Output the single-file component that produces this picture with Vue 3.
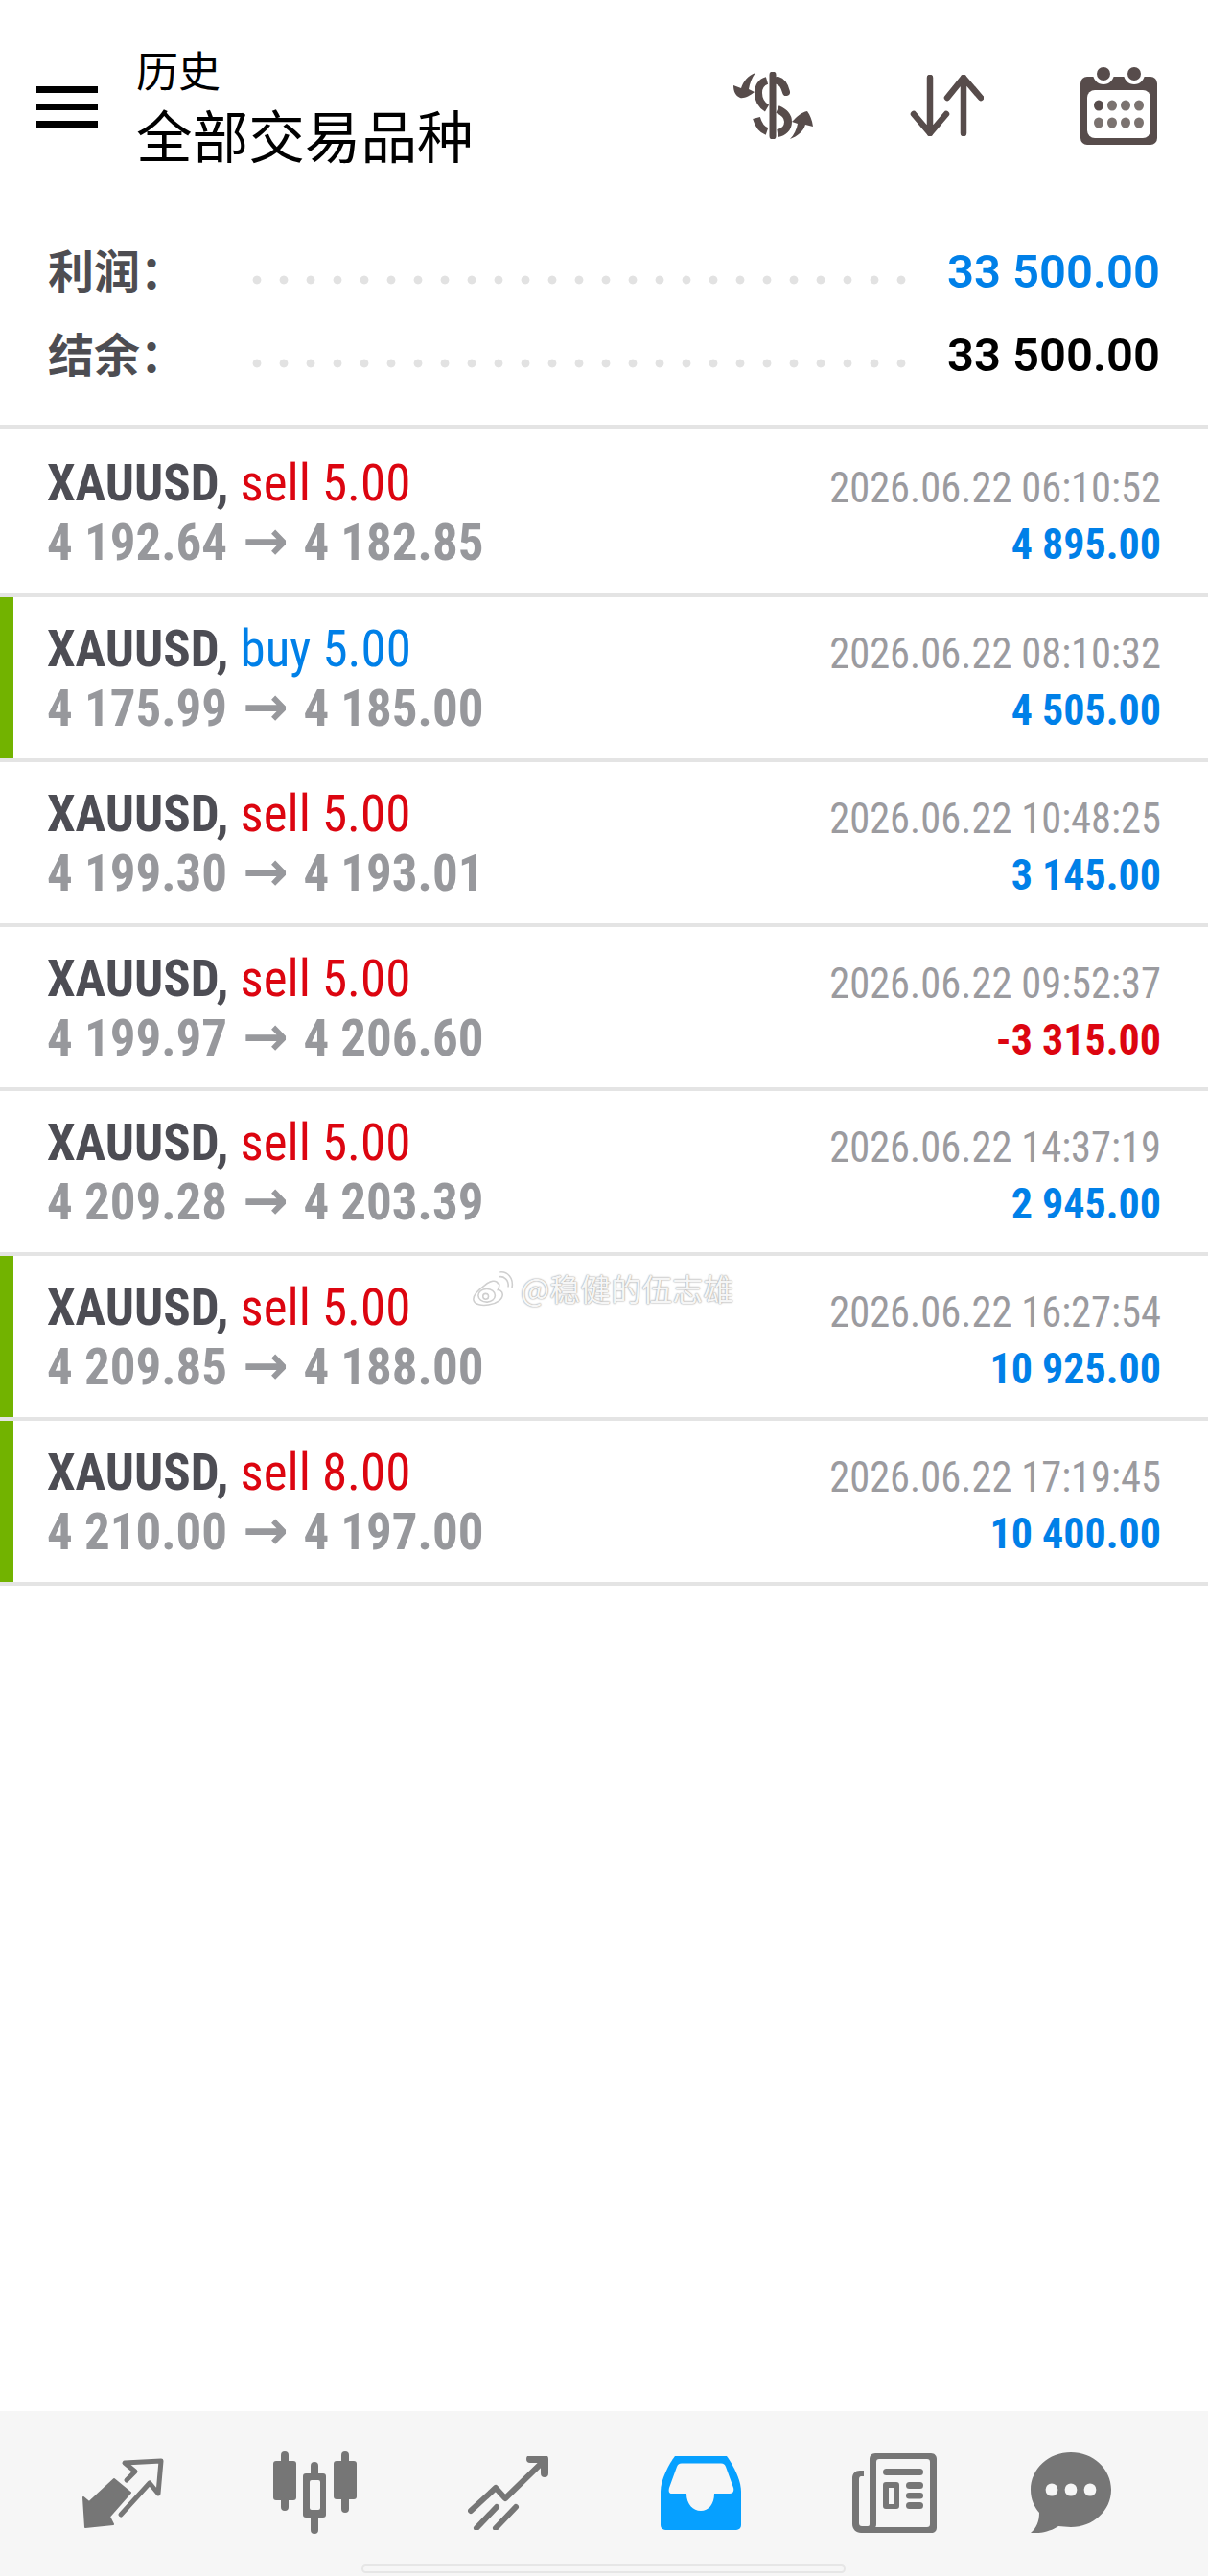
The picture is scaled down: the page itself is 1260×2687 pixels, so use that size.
<script setup>
const trades = [
  { side: 'sell', lot: '5.00', open: '4 192.64', close: '4 182.85', time: '2026.06.22 06:10:52', profit: '4 895.00', mark: false },
  { side: 'buy', lot: '5.00', open: '4 175.99', close: '4 185.00', time: '2026.06.22 08:10:32', profit: '4 505.00', mark: true },
  { side: 'sell', lot: '5.00', open: '4 199.30', close: '4 193.01', time: '2026.06.22 10:48:25', profit: '3 145.00', mark: false },
  { side: 'sell', lot: '5.00', open: '4 199.97', close: '4 206.60', time: '2026.06.22 09:52:37', profit: '-3 315.00', mark: false, loss: true },
  { side: 'sell', lot: '5.00', open: '4 209.28', close: '4 203.39', time: '2026.06.22 14:37:19', profit: '2 945.00', mark: false },
  { side: 'sell', lot: '5.00', open: '4 209.85', close: '4 188.00', time: '2026.06.22 16:27:54', profit: '10 925.00', mark: true },
  { side: 'sell', lot: '8.00', open: '4 210.00', close: '4 197.00', time: '2026.06.22 17:19:45', profit: '10 400.00', mark: true }
]
</script>

<template>
  <div class="page">
    <header class="top">
      <div class="burger"><i></i><i></i><i></i></div>
      <div class="titles">
        <div class="t1">历史</div>
        <div class="t2">全部交易品种</div>
      </div>
      <div class="tools">
        <svg width="84" height="70" viewBox="0 0 84 70">
          <g fill="none" stroke="#574c4b" stroke-width="8" stroke-linecap="round">
            <path d="M42 3V67" stroke-width="7"/>
            <path d="M56 21C54 13 51 10 47 9"/>
            <path d="M36 9C29 11 27 16 27 22C27 30 31 35 36 38" stroke-linecap="butt"/>
            <path d="M47 39C54 42 58 46 58 52C58 59 53 63 47 64" stroke-linecap="butt"/>
            <path d="M25 48C27 55 30 60 36 62" stroke-linecap="butt"/>
          </g>
          <path d="M24 1C16 4 11 10 9 17L1 14C1 20 3 25 8 27C12 28 18 25 23 21L17 18C18 12 20 6 24 1Z" fill="#574c4b"/>
          <path d="M60 70C68 67 74 62 76 55L84 57C83 50 81 45 78 41C72 42 67 47 62 52L68 54C67 60 64 66 60 70Z" fill="#574c4b"/>
        </svg>
        <svg width="77" height="64" viewBox="0 0 77 64">
          <g fill="none" stroke="#574c4b" stroke-width="6.5" stroke-linecap="round" stroke-linejoin="round">
            <path d="M21 3V61M4 41L21 61L38 41"/>
            <path d="M56 61V3M39 24L56 3L74 24"/>
          </g>
        </svg>
        <svg width="80" height="81" viewBox="0 0 80 81">
          <rect x="0" y="10" width="80" height="71" rx="7" fill="#574c4b"/>
          <rect x="7" y="24" width="66" height="50" rx="8" fill="#fff"/>
          <circle cx="24" cy="7" r="11" fill="#fff"/>
          <circle cx="56" cy="7" r="11" fill="#fff"/>
          <ellipse cx="24" cy="7" rx="7" ry="7" fill="#574c4b"/>
          <ellipse cx="56" cy="7" rx="7" ry="7" fill="#574c4b"/>
          <g fill="#7b7370">
            <ellipse cx="19" cy="40" rx="5" ry="5.5" fill="#574c4b"/><ellipse cx="33" cy="40" rx="5" ry="5.5"/><ellipse cx="47" cy="40" rx="5" ry="5.5"/><ellipse cx="61" cy="40" rx="5" ry="5.5"/>
            <ellipse cx="19" cy="58" rx="5" ry="5.5"/><ellipse cx="33" cy="58" rx="5" ry="5.5"/><ellipse cx="47" cy="58" rx="5" ry="5.5"/><ellipse cx="61" cy="58" rx="5" ry="5.5"/>
          </g>
        </svg>
      </div>
    </header>

    <section class="summary">
      <div class="sum-row">
        <span class="sum-label">利润：</span>
        <span class="dots"></span>
        <span class="sum-val blue">33 500.00</span>
      </div>
      <div class="sum-row">
        <span class="sum-label">结余：</span>
        <span class="dots"></span>
        <span class="sum-val">33 500.00</span>
      </div>
    </section>

    <ul class="list">
      <li v-for="t in trades" :key="t.time" class="row" :class="{ marked: t.mark }">
        <div class="left">
          <div class="l1"><b>XAUUSD,</b> <span :class="t.side === 'buy' ? 'blue' : 'red'">{{ t.side }} {{ t.lot }}</span></div>
          <div class="l2">{{ t.open }}<span class="arr">→</span>{{ t.close }}</div>
        </div>
        <div class="right">
          <div class="time">{{ t.time }}</div>
          <div class="profit" :class="t.loss ? 'red' : 'blue'">{{ t.profit }}</div>
        </div>
      </li>
      <li class="wm">
        <svg width="47" height="41" viewBox="0 0 48 42" fill="none" stroke="#cfcfcf" stroke-width="1.6">
          <path d="M30 16C28 12 22 13 16 18C9 23 3 29 4 34C5 39 13 40 20 39C29 38 35 33 35 28C35 24 31 23 30 23C32 19 32 16 30 16Z"/>
          <ellipse cx="18" cy="29" rx="9" ry="7"/>
          <circle cx="17" cy="30" r="3"/>
          <path d="M31 9C36 8 42 12 41 20M32 4C40 3 47 10 45 21"/>
        </svg>
        <span>@稳健的伍志雄</span>
      </li>
    </ul>

    <div class="grow"></div>

    <nav class="nav">
      <svg width="85" height="74" viewBox="0 0 85 74">
        <path d="M33 23L50 37L28 62L32 70L3 73L1 42L7 47Z" fill="#767676" stroke="#767676" stroke-width="2" stroke-linejoin="round"/>
        <path d="M46 24L55 15L44 6L82 4L79 38L70 27L40 60" fill="none" stroke="#767676" stroke-width="5" stroke-linejoin="round" stroke-linecap="round"/>
      </svg>
      <svg width="87" height="86" viewBox="0 0 87 86" fill="#767676">
        <rect x="0" y="10" width="24" height="41" rx="3"/><rect x="8" y="0" width="8" height="62" rx="4"/>
        <rect x="63" y="10" width="24" height="40" rx="3"/><rect x="71" y="0" width="8" height="64" rx="4"/>
        <rect x="31" y="23" width="24" height="46" rx="3"/><rect x="39" y="11" width="8" height="75" rx="4"/>
        <rect x="38" y="30" width="11" height="31" rx="2" fill="#f6f6f6"/>
      </svg>
      <svg width="84" height="77" viewBox="0 0 84 77" fill="none" stroke="#767676" stroke-width="6" stroke-linecap="round" stroke-linejoin="round">
        <path d="M3 57L29 33L39 44L76 8"/>
        <path d="M65 3H80V18" stroke-width="8"/>
        <path d="M30 53L9 75M50 53L29 75"/>
      </svg>
      <svg width="84" height="77" viewBox="0 0 84 77">
        <path d="M15 0H69C75 8 84 24 84 37V72A5 5 0 0 1 79 77H5A5 5 0 0 1 0 72V37C0 24 9 8 15 0Z" fill="#06a0ff"/>
        <path d="M22 7.5H63C66 7.5 67 9 68 11L76 33C77 37 75 39 72 39H56C56 50 50 57 42 57C34 57 27 50 27 39H12C9 39 8 37 9 33L17 11C18 9 19 7.5 22 7.5Z" fill="#f6f6f6"/>
      </svg>
      <svg width="88" height="83" viewBox="0 0 88 83" fill="#767676">
        <path fill-rule="evenodd" d="M24 0H82C86 0 88 3 88 6V77C88 81 86 83 82 83H9C4 83 0 79 0 74V26C0 21 3 18 8 18H12V24H9C8 24 7 25 7 27V73C7 75 8 76 10 76H16C18 76 18 75 18 73V6C18 3 20 0 24 0ZM28 6C26 6 25 7 25 9V74C25 76 24.5 77 24 77H78C80 77 81 76 81 74V9C81 7 80 6 78 6Z"/>
        <rect x="32" y="16" width="42" height="7" rx="3.5"/>
        <path fill-rule="evenodd" d="M35 30H46C48 30 49 31 49 33V55C49 57 48 58 46 58H35C33 58 32 57 32 55V33C32 31 33 30 35 30ZM38 36V53H43V36Z"/>
        <rect x="56" y="30" width="18" height="7" rx="3.5"/><rect x="56" y="41" width="18" height="6.5" rx="3.2"/><rect x="56" y="51" width="18" height="7" rx="3.5"/>
      </svg>
      <svg width="84" height="84" viewBox="0 0 84 84">
        <path d="M42 0C65 0 84 17 84 39C84 61 65 78 42 78C37 78 33 77 29 77C22 82 10 85 0 84C6 79 9 72 9 63C4 57 0 49 0 39C0 17 19 0 42 0Z" fill="#767676"/>
        <ellipse cx="22" cy="39" rx="6.4" ry="6.6" fill="#f6f6f6"/><ellipse cx="42" cy="39" rx="6.4" ry="6.6" fill="#f6f6f6"/><ellipse cx="62" cy="39" rx="6.4" ry="6.6" fill="#f6f6f6"/>
      </svg>
      <div class="home"></div>
    </nav>
  </div>
</template>

<style>
html, body { margin: 0; background: #fff; }
</style>

<style scoped>
.page {
  width: 1260px;
  height: 2687px;
  display: flex;
  flex-direction: column;
  font-family: Roboto, "Noto Sans CJK SC", sans-serif;
  background: #fff;
  overflow: hidden;
}
.top {
  height: 220px;
  flex: none;
  display: flex;
  align-items: center;
  box-sizing: border-box;
  padding: 0 53px 0 38px;
}
.burger { width: 64px; display: flex; flex-direction: column; gap: 11px; margin-top: 2px; }
.burger i { display: block; height: 7px; background: #000; }
.titles { margin-left: 40px; align-self: flex-start; padding-top: 41px; }
.t1 { font: 400 44px/63px "Noto Sans CJK SC", sans-serif; color: #000; }
.t2 { font: 400 58.6px/72px "Noto Sans CJK SC", sans-serif; color: #000; }
.tools { margin-left: auto; display: flex; align-items: center; gap: 101px; }
.tools svg { display: block; }
.summary { height: 227px; flex: none; box-sizing: border-box; padding: 19px 50px 0; border-bottom: 4px solid #e4e4e4; }
.sum-row { display: flex; align-items: center; height: 87px; }
.sum-label { font: 700 48px/1 "Noto Sans CJK SC", sans-serif; color: #4d4d52; width: 204px; margin-bottom: 5px; }
.dots { width: 700px; height: 10px; margin-top: 18px; background-image: radial-gradient(circle, #e2e2e2 4px, transparent 4.8px); background-size: 28px 10px; }
.sum-val { font: 600 49px/1 Roboto, sans-serif; color: #000; margin-left: auto; padding-top: 2px; }
.blue { color: #0080e8; }
.red { color: #dc0510; }
.sum-val.blue { color: #0080e8; }
.list { list-style: none; margin: 0; padding: 0; position: relative; }
.row { height: 171.8px; box-sizing: border-box; border-bottom: 4px solid #e4e4e4; display: flex; justify-content: space-between; padding: 0 49px; position: relative; }
.row:first-child { height: 176px; padding-top: 3px; }
.row.marked::before { content: ""; position: absolute; left: 0; top: 0; bottom: 0; width: 14px; background: #72b300; }
.left { padding-top: 24px; transform: scaleX(0.98); transform-origin: left; }
.l1 { font: 400 54px/60px "Roboto Condensed", Roboto, sans-serif; white-space: nowrap; color: #4d4d54; }
.l1 b { font-weight: 700; }
.l2 { font: 700 54px/60px "Roboto Condensed", Roboto, sans-serif; white-space: nowrap; color: #97989c; }
.arr { display: inline-block; width: 81px; text-align: center; font: 700 58px/60px "DejaVu Sans", sans-serif; }
.right { padding-top: 31px; text-align: right; }
.time { font: 400 44px/56px "Roboto Condensed", Roboto, sans-serif; color: #9b9b9f; white-space: nowrap; transform: scaleX(0.966); transform-origin: right; }
.profit { font: 700 44px/62px "Roboto Condensed", Roboto, sans-serif; white-space: nowrap; }
.wm { position: absolute; left: 490px; top: 875px; display: flex; align-items: center; gap: 6px; color: #f6f6f6; font: 400 32px/42px "Noto Sans CJK SC", sans-serif; text-shadow: 0 0 2px #9a9a9a, 0 0 1px #b0b0b0; }
.grow { flex: 1; }
.nav { height: 172px; flex: none; background: #f6f6f6; position: relative; display: flex; align-items: center; box-sizing: border-box; padding: 0 0 2px 86px; }
.nav svg { display: block; flex: none; }
.nav svg:nth-child(2) { margin-left: 114px; }
.nav svg:nth-child(3) { margin-left: 116px; }
.nav svg:nth-child(4) { margin-left: 117px; }
.nav svg:nth-child(5) { margin-left: 116px; }
.nav svg:nth-child(6) { margin-left: 98px; }
.home { position: absolute; left: 377px; top: 160px; width: 505px; height: 9px; border-radius: 5px; border: 2px solid #e6e6e6; box-sizing: border-box; }
</style>
